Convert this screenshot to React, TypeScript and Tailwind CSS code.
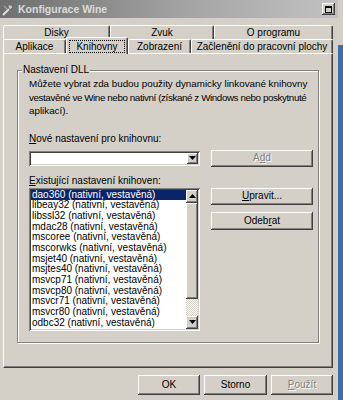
import React from "react";

const raised =
  "shadow-[inset_-1px_-1px_0_#404040,inset_1px_1px_0_#ffffff,inset_-2px_-2px_0_#808080]";
const sunken =
  "shadow-[inset_1px_1px_0_#808080,inset_-1px_-1px_0_#ffffff,inset_2px_2px_0_#404040,inset_-2px_-2px_0_#d4d0c8]";

function Btn({
  children,
  className = "",
  disabled = false,
}: {
  children: React.ReactNode;
  className?: string;
  disabled?: boolean;
}) {
  return (
    <div
      className={`flex items-center justify-center bg-[#d4d0c8] ${raised} ${
        disabled ? "text-[#808080] [text-shadow:1px_1px_0_#ffffff]" : "text-black"
      } ${className}`}
    >
      {children}
    </div>
  );
}

function Arrow({ down }: { down?: boolean }) {
  return (
    <svg width="7" height="4" viewBox="0 0 7 4">
      {down ? (
        <polygon points="0,0 7,0 3.5,4" fill="#000" />
      ) : (
        <polygon points="0,4 7,4 3.5,0" fill="#000" />
      )}
    </svg>
  );
}

function Tab({
  label,
  w,
  selected = false,
}: {
  label: string;
  w: string;
  selected?: boolean;
}) {
  return (
    <div
      className={`${w} flex items-center justify-center border-t border-l border-t-white border-l-white border-r border-r-[#404040] shadow-[inset_-1px_0_0_#808080] rounded-t-[2px] bg-[#d4d0c8] whitespace-nowrap ${
        selected ? "relative z-10 -mt-[2px] h-[17px] px-[2px] pt-[2px] pb-[1px]" : "h-[14px]"
      }`}
    >
      {selected ? (
        <span className="w-full h-full flex items-center justify-center border border-dotted border-black">
          {label}
        </span>
      ) : (
        label
      )}
    </div>
  );
}

const items = [
  "dao360",
  "libeay32",
  "libssl32",
  "mdac28",
  "mscoree",
  "mscorwks",
  "msjet40",
  "msjtes40",
  "msvcp71",
  "msvcp80",
  "msvcr71",
  "msvcr80",
  "odbc32",
];

export default function App() {
  return (
    <div className="w-[343px] h-[400px] flex bg-[#d4d0c8] font-['Liberation_Sans',Arial,sans-serif] text-[10px] leading-none text-black overflow-hidden">
      <div className="w-[338px] flex flex-col">
        {/* title bar */}
        <div className="h-[18px] flex items-center bg-[linear-gradient(90deg,#6e6e6e,#a4a4a4_55%,#c2c2c2)] pl-[2px] pr-[3px]">
          <svg width="13" height="13" viewBox="0 0 13 13" className="shrink-0">
            <path d="M1 12 L7 6" stroke="#e0e0e0" strokeWidth="2" />
            <path d="M6 2 Q9 1 11 4 L8 7 Q6 5 6 2Z" fill="#c8c8c8" stroke="#505050" strokeWidth="0.6" />
            <path d="M2 3 L5 6" stroke="#9aa" strokeWidth="1.2" />
          </svg>
          <span className="ml-[3px] font-bold text-[10.5px] text-[#dcdcdc]">
            Konfigurace Wine
          </span>
          <div className="flex-1" />
          <div className={`w-[13px] h-[12px] flex items-center justify-center bg-[#d4d0c8] ${raised}`}>
            <div className="w-[7px] h-[7px] border border-black border-t-2" />
          </div>
        </div>

        {/* tabs + panel */}
        <div className="pl-[3px] pr-[5px] pt-[7px]">
          <div className="flex h-[14px]">
            <Tab label="Disky" w="w-[107px]" />
            <Tab label="Zvuk" w="w-[104px]" />
            <Tab label="O programu" w="w-[119px]" />
          </div>
          <div className="flex h-[14px] items-start">
            <Tab label="Aplikace" w="w-[63px]" />
            <Tab label="Knihovny" w="w-[62px]" selected />
            <Tab label="Zobrazení" w="w-[63px]" />
            <Tab label="Začlenění do pracovní plochy" w="w-[142px]" />
          </div>
          <div className="h-[315px] border border-t-white border-l-white border-r-[#404040] border-b-[#404040] shadow-[inset_-1px_-1px_0_#808080] pl-[13px] pt-[16px]">
            {/* group box */}
            <div className="relative w-[302px] h-[273px] border border-[#808080] shadow-[1px_1px_0_#ffffff,inset_1px_1px_0_#ffffff] pl-[11px] pt-[6px]">
              <span className="absolute -top-[6px] left-[4px] px-[1px] bg-[#d4d0c8]">Nastavení DLL</span>
              <div className="leading-[13.5px] whitespace-nowrap text-[9.8px]">
                <div>Můžete vybrat zda budou použity dynamicky linkované knihovny</div>
                <div className="tracking-[-0.4px]">
                  vestavěné ve Wine nebo nativní (získané z Windows nebo poskytnuté
                </div>
                <div>aplikací).</div>
              </div>
              <div className="mt-[15px] leading-[12px]">
                <span className="underline">N</span>ové nastavení pro knihovnu:
              </div>
              <div className="mt-[5px] flex items-start gap-[11px]">
                <div className={`mt-[1px] w-[171px] h-[15px] bg-white ${sunken} flex justify-end items-center pr-[2px]`}>
                  <div className={`w-[11px] h-[11px] flex items-center justify-center bg-[#d4d0c8] ${raised}`}>
                    <Arrow down />
                  </div>
                </div>
                <Btn disabled className="w-[102px] h-[17px]">
                  A<span className="underline">d</span>d
                </Btn>
              </div>
              <div className="mt-[8px] leading-[12px]">
                <span className="underline">E</span>xistující nastavení knihoven:
              </div>
              <div className="mt-[1px] flex items-start gap-[11px]">
                <div className={`w-[171px] h-[143px] bg-white ${sunken} p-[2px] flex`}>
                  <div className="flex-1 flex flex-col overflow-hidden">
                    {items.map((it, i) => (
                      <div
                        key={it}
                        className={`h-[10.7px] leading-[10.7px] pl-[1px] whitespace-nowrap ${
                          i === 0 ? "bg-[#0a246a] text-white" : "text-black"
                        }`}
                      >
                        {it} (nativní, vestavěná)
                      </div>
                    ))}
                  </div>
                  <div className="w-[12px] flex flex-col bg-[repeating-conic-gradient(#ffffff_0_25%,#d4d0c8_0_50%)] bg-[length:2px_2px]">
                    <div className={`h-[13px] flex items-center justify-center bg-[#d4d0c8] ${raised}`}>
                      <Arrow />
                    </div>
                    <div className={`h-[96px] bg-[#d4d0c8] ${raised}`} />
                    <div className="flex-1" />
                    <div className={`h-[13px] flex items-center justify-center bg-[#d4d0c8] ${raised}`}>
                      <Arrow down />
                    </div>
                  </div>
                </div>
                <div className="flex flex-col gap-[7px]">
                  <Btn className="w-[102px] h-[17px]">
                    <span className="underline">U</span>pravit...
                  </Btn>
                  <Btn className="w-[102px] h-[18px]">
                    Odeb<span className="underline">r</span>at
                  </Btn>
                </div>
              </div>
            </div>
          </div>
        </div>

        {/* bottom buttons */}
        <div className="mt-[7px] flex justify-end gap-[4px] pr-[5px]">
          <Btn className="w-[62px] h-[20px]">OK</Btn>
          <Btn className="w-[63px] h-[20px]">Storno</Btn>
          <Btn disabled className="w-[62px] h-[20px]">
            <span className="underline">P</span>oužít
          </Btn>
        </div>
      </div>
      <div className="w-[5px] flex flex-col">
        <div className="h-[45px] bg-[#d4d0c8]" />
        <div className="flex-1 bg-[#3a6ea5]" />
      </div>
    </div>
  );
}
